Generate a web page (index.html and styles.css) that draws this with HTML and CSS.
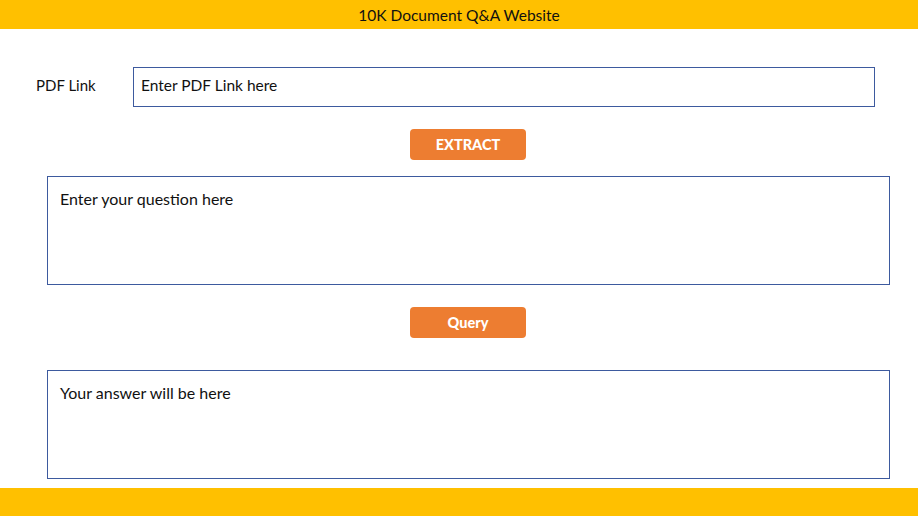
FILE: index.html
```html
<!DOCTYPE html>
<html>
<head>
<meta charset="utf-8">
<link rel="stylesheet" href="styles.css">
</head>
<body>
<div class="page">
  <header class="topbar">10K Document Q&amp;A Website</header>
  <main class="content">
    <div class="link-row">
      <label class="link-label">PDF Link</label>
      <div class="link-input">Enter PDF Link here</div>
    </div>
    <div class="btn-row extract-row"><button class="btn">EXTRACT</button></div>
    <div class="textbox question">Enter your question here</div>
    <div class="btn-row query-row"><button class="btn">Query</button></div>
    <div class="textbox answer">Your answer will be here</div>
  </main>
  <footer class="bottombar"></footer>
</div>
</body>
</html>
```
FILE: styles.css
```css
html, body {
  margin: 0;
  padding: 0;
  background: #ffffff;
}
.page {
  width: 918px;
  height: 516px;
  display: flex;
  flex-direction: column;
  font-family: Lato, "Open Sans", sans-serif;
  color: #111;
  overflow: hidden;
}
.topbar {
  height: 29px;
  background: #FFC000;
  display: flex;
  align-items: center;
  justify-content: center;
  font-size: 15.5px;
  color: #111;
}
.content {
  flex: 1;
  display: flex;
  flex-direction: column;
  padding-top: 38px;
}
.link-row {
  display: flex;
  align-items: center;
  height: 40px;
}
.link-label {
  width: 97px;
  padding-left: 36px;
  padding-bottom: 4px;
  font-size: 15px;
}
.link-input {
  box-sizing: border-box;
  width: 742px;
  height: 40px;
  border: 1px solid #3D5A9E;
  display: flex;
  align-items: center;
  padding-left: 7px;
  padding-bottom: 4px;
  font-size: 15.5px;
}
.btn-row {
  display: flex;
  padding-left: 410px;
}
.extract-row {
  margin-top: 22px;
  margin-bottom: 16px;
}
.query-row {
  margin-top: 22px;
  margin-bottom: 32px;
}
.btn {
  width: 116px;
  height: 31px;
  background: #ED7D31;
  border: none;
  border-radius: 4px;
  color: #fff;
  font-family: Lato, "Open Sans", sans-serif;
  font-weight: 900;
  font-size: 14.5px;
  padding: 0;
}
.textbox {
  box-sizing: border-box;
  margin-left: 47px;
  width: 843px;
  height: 109px;
  border: 1px solid #3D5A9E;
  padding: 13px 0 0 12px;
  font-size: 16px;
  line-height: 18px;
}
.bottombar {
  height: 28px;
  background: #FFC000;
}
```
